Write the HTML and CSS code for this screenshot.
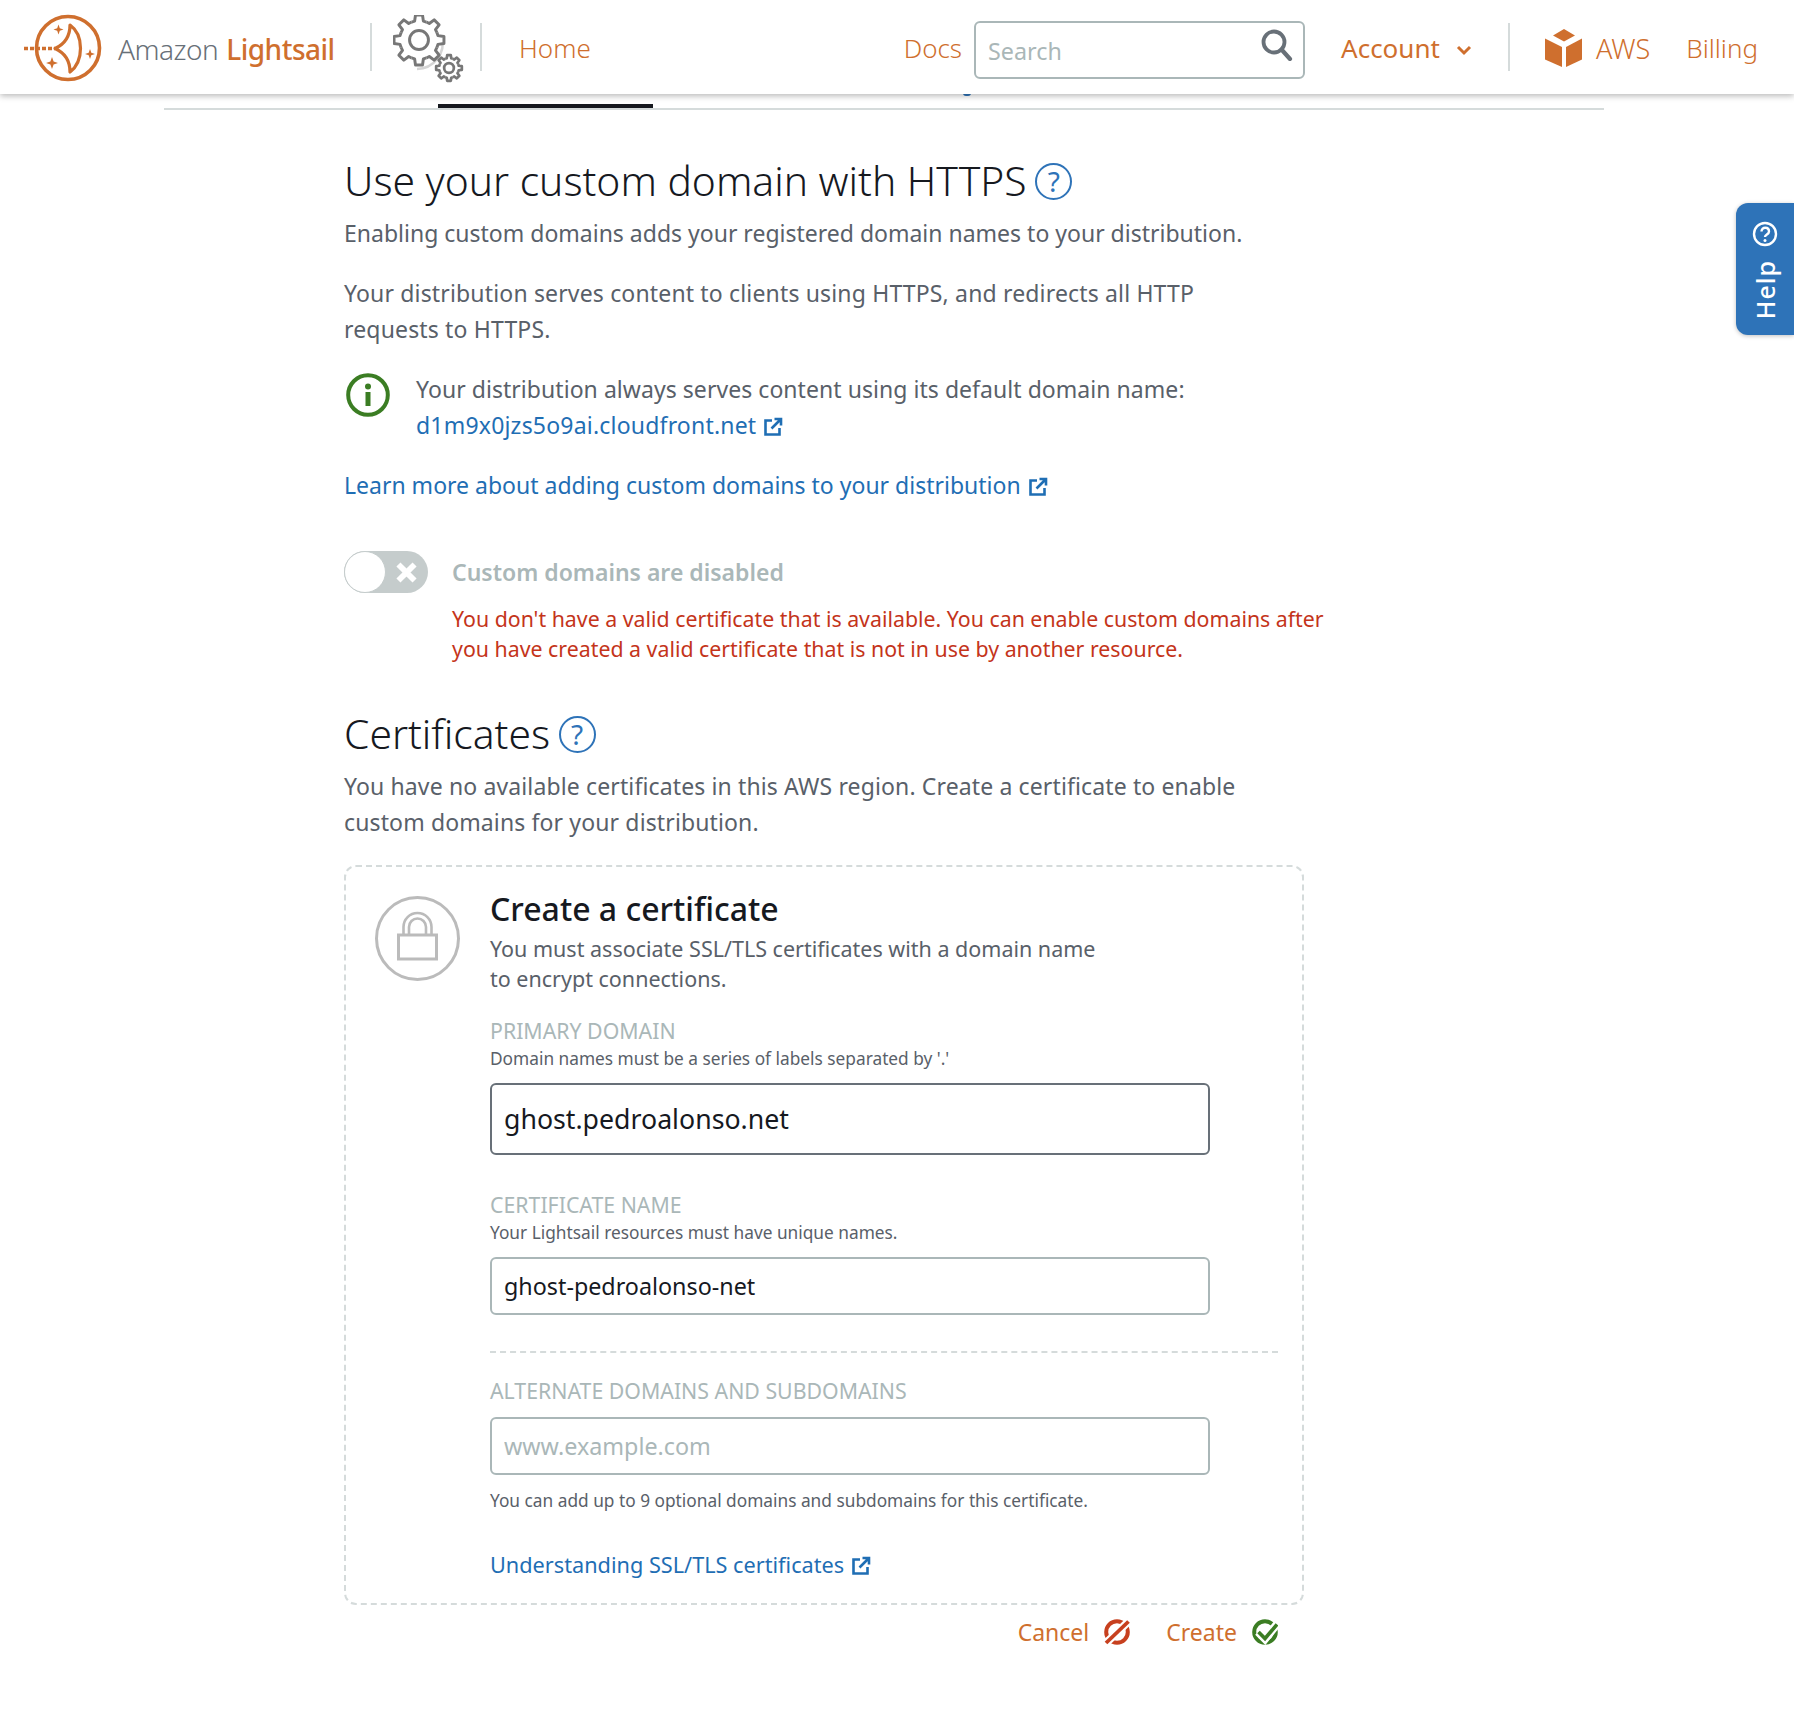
FILE: index.html
```html
<!DOCTYPE html>
<html lang="en">
<head>
<meta charset="utf-8">
<title>Amazon Lightsail</title>
<link rel="stylesheet" href="styles.css">
</head>
<body>
<svg class="defs" width="0" height="0" aria-hidden="true">
  <defs>
    <symbol id="ext" viewBox="0 0 20 20">
      <path d="M9 3.500H2.500v14h14V11" fill="none" stroke="currentColor" stroke-width="2.600"/>
      <path d="M8.500 11.500L17 3M11.500 2h6.500v6.500" fill="none" stroke="currentColor" stroke-width="2.600"/>
    </symbol>
    <g id="tooth">
      <path d="M17.090 -7.080L18.030 -4.160L23.770 -3.340L23.770 3.340L18.030 4.160L17.090 7.080"/>
    </g>
    <g id="gear">
      <use href="#tooth"/>
      <use href="#tooth" transform="rotate(45)"/>
      <use href="#tooth" transform="rotate(90)"/>
      <use href="#tooth" transform="rotate(135)"/>
      <use href="#tooth" transform="rotate(180)"/>
      <use href="#tooth" transform="rotate(225)"/>
      <use href="#tooth" transform="rotate(270)"/>
      <use href="#tooth" transform="rotate(315)"/>
    </g>
  </defs>
</svg>

<header class="topbar">
  <a class="brand">
    <svg class="brand-logo" width="80" height="70" viewBox="0 0 80 70">
      <circle cx="44" cy="35" r="31.500" fill="none" stroke="#cf6f2e" stroke-width="3.600"/>
      <path d="M46 12C60 22 60 48 46 59C46 47 41 40 31 35.500C41 31 46 24 46 12Z" fill="#fff" stroke="#cf6f2e" stroke-width="3.200" stroke-linejoin="round"/>
      <path d="M0 35.500H31" stroke="#cf6f2e" stroke-width="3.400" stroke-dasharray="4 2" fill="none"/>
      <path d="M34.500 11.500l1.300 3.700 3.700 1.300-3.700 1.300-1.300 3.700-1.300-3.700-3.700-1.300 3.700-1.300z" fill="#cf6f2e"/>
      <path d="M66 36l1.300 3.700 3.700 1.300-3.700 1.300-1.300 3.700-1.300-3.700-3.700-1.300 3.700-1.300z" fill="#cf6f2e"/>
      <path d="M28 44l1.600 4.400 4.400 1.600-4.400 1.600-1.600 4.400-1.600-4.400-4.400-1.600 4.400-1.600z" fill="#cf6f2e"/>
    </svg>
    <span class="brand-amazon">Amazon</span>
    <span class="brand-name">Lightsail</span>
  </a>
  <span class="sep sep-a"></span>
  <svg class="gears" width="72" height="70" viewBox="0 0 72 70">
    <path d="M49 22A26 26 0 0 1 24 54" fill="none" stroke="#d5d5d5" stroke-width="2.500"/>
    <g transform="translate(26 25) scale(1.050)" fill="#fff" stroke="#777" stroke-width="2.800" stroke-linejoin="round">
      <circle r="18" stroke="none"/>
      <use href="#gear"/>
      <circle r="9" fill="none"/>
    </g>
    <g transform="translate(56 53) scale(.54)" fill="#fff" stroke="#777" stroke-width="5" stroke-linejoin="round">
      <circle r="18" stroke="none"/>
      <use href="#gear"/>
      <circle r="9" fill="none"/>
    </g>
  </svg>
  <span class="sep sep-b"></span>
  <a class="nav-link nav-home">Home</a>
  <a class="nav-link nav-docs">Docs</a>
  <div class="search">
    <input class="search-input" type="text" placeholder="Search">
    <svg class="search-icon" width="32" height="32" viewBox="0 0 32 32">
      <circle cx="13" cy="13" r="10.500" fill="none" stroke="#687078" stroke-width="3.800"/>
      <path d="M20.500 20.500L29 30" stroke="#687078" stroke-width="4.200" stroke-linecap="round"/>
    </svg>
  </div>
  <a class="nav-account">Account
    <svg class="chevron" width="16" height="12" viewBox="0 0 16 12"><path d="M2 3l6 6 6-6" fill="none" stroke="#cf6f2e" stroke-width="3"/></svg>
  </a>
  <span class="sep sep-c"></span>
  <svg class="cube" width="38" height="38" viewBox="0 0 38 38">
    <path d="M19 0L30 6.500 19 12.500 8 6.500z" fill="#cf6f2e"/>
    <path d="M0 9.500L17 18V38L0 30.500z" fill="#cf6f2e"/>
    <path d="M37 9.500L21 18V38L37 30.500z" fill="#cf6f2e"/>
  </svg>
  <a class="nav-link nav-aws">AWS</a>
  <a class="nav-link nav-billing">Billing</a>
</header>

<div class="tabs">
  <span class="tab-active"></span>
  <span class="tab-peek"></span>
</div>

<aside class="help-tab">
  <svg width="26" height="26" viewBox="0 0 26 26">
    <circle cx="13" cy="13" r="11" fill="none" stroke="#fff" stroke-width="2.400"/>
    <path d="M9.500 10.500c0-5 7.500-5 7.500 0 0 3-4 3-4 5.500" fill="none" stroke="#fff" stroke-width="2.400"/>
    <circle cx="13" cy="19.500" r="1.500" fill="#fff"/>
  </svg>
  <span class="help-label">Help</span>
</aside>

<main class="content">
  <h1 class="heading heading-first">Use your custom domain with HTTPS <span class="q">?</span></h1>
  <p class="para para-tight">Enabling custom domains adds your registered domain names to your distribution.</p>
  <p class="para para-next para-wide">Your distribution serves content to clients using HTTPS, and redirects all HTTP<br>requests to HTTPS.</p>
  <div class="info">
    <svg class="info-icon" width="46" height="46" viewBox="0 0 46 46">
      <circle cx="23" cy="23" r="19.800" fill="none" stroke="#3b7d23" stroke-width="4"/>
      <rect x="20.500" y="20" width="5" height="14" fill="#3b7d23"/>
      <circle cx="23" cy="14.500" r="3" fill="#3b7d23"/>
    </svg>
    <p class="para para-info">Your distribution always serves content using its default domain name:<br><a class="link link-domain">d1m9x0jzs5o9ai.cloudfront.net<svg class="ext" width="20" height="20"><use href="#ext"/></svg></a></p>
  </div>
  <p class="para para-next"><a class="link">Learn more about adding custom domains to your distribution<svg class="ext" width="20" height="20"><use href="#ext"/></svg></a></p>

  <div class="toggle-row">
    <div class="toggle">
      <span class="knob"></span>
      <svg class="toggle-x" width="23" height="23" viewBox="0 0 20 20"><path d="M3 3l14 14M17 3L3 17" stroke="#fff" stroke-width="5"/></svg>
    </div>
    <span class="toggle-label">Custom domains are disabled</span>
  </div>
  <p class="error">You don't have a valid certificate that is available. You can enable custom domains after<br>you have created a valid certificate that is not in use by another resource.</p>

  <h2 class="heading heading-second">Certificates <span class="q">?</span></h2>
  <p class="para para-second para-cert">You have no available certificates in this AWS region. Create a certificate to enable<br>custom domains for your distribution.</p>

  <section class="card">
    <svg class="lock" width="85" height="85" viewBox="0 0 85 85" fill="none" stroke="#bbb">
      <circle cx="42.500" cy="42.500" r="41" stroke-width="3"/>
      <rect x="23.500" y="39" width="38" height="24" stroke-width="3"/>
      <path d="M28.500 39V31a14 14 0 0 1 28 0V39" stroke-width="2.600"/>
      <path d="M34 39V31a8.500 8.500 0 0 1 17 0V39" stroke-width="2.600"/>
    </svg>
    <div class="card-body">
      <h3 class="card-title">Create a certificate</h3>
      <p class="card-desc">You must associate SSL/TLS certificates with a domain name<br>to encrypt connections.</p>

      <label class="label label-first" for="primary">PRIMARY DOMAIN</label>
      <p class="hint">Domain names must be a series of labels separated by '.'</p>
      <input id="primary" class="field field-large" type="text" value="ghost.pedroalonso.net">

      <label class="label label-second" for="certname">CERTIFICATE NAME</label>
      <p class="hint">Your Lightsail resources must have unique names.</p>
      <input id="certname" class="field" type="text" value="ghost-pedroalonso-net">

      <div class="divider"></div>

      <label class="label label-third" for="alt">ALTERNATE DOMAINS AND SUBDOMAINS</label>
      <input id="alt" class="field field-alt" type="text" placeholder="www.example.com">
      <p class="hint hint-after">You can add up to 9 optional domains and subdomains for this certificate.</p>

      <a class="link card-link">Understanding SSL/TLS certificates<svg class="ext" width="20" height="20"><use href="#ext"/></svg></a>
    </div>
  </section>

  <div class="actions">
    <a class="action">Cancel
      <svg width="26" height="26" viewBox="0 0 26 26">
        <circle cx="13" cy="13" r="10.800" fill="none" stroke="#c7401f" stroke-width="4"/>
        <path d="M24 3L2 24" stroke="#fff" stroke-width="8"/>
        <path d="M24.500 2.500L2 24" stroke="#c7401f" stroke-width="3.800"/>
      </svg>
    </a>
    <a class="action">Create
      <svg width="26" height="26" viewBox="0 0 26 26">
        <circle cx="13" cy="13" r="10.800" fill="none" stroke="#3b7d23" stroke-width="4"/>
        <path d="M6 13l7 7L25 5" fill="none" stroke="#fff" stroke-width="8"/>
        <path d="M6.500 13l6.500 6.500L25 5.500" fill="none" stroke="#3b7d23" stroke-width="3.600"/>
      </svg>
    </a>
  </div>
</main>
</body>
</html>
```

FILE: styles.css
```css
* { box-sizing: border-box; }

html, body {
  margin: 0;
  padding: 0;
  background: #fff;
}

body {
  position: relative;
  font-family: "Noto Sans", "Open Sans", sans-serif;
  color: #596069;
}

.defs { position: absolute; }

p, h1, h2, h3 { margin: 0; }

/* top bar */
.topbar {
  position: relative;
  z-index: 2;
  display: flex;
  align-items: center;
  height: 94px;
  padding-top: 2px;
  background: #fff;
  box-shadow: 0 2px 6px rgba(0, 0, 0, .28);
}

.brand {
  display: flex;
  align-items: center;
  width: 370px;
  padding-left: 24px;
  font-size: 28px;
  letter-spacing: -.5px;
}

.brand-logo { flex: none; margin-right: 14px; }
.brand-amazon { margin-top: 2px; font-weight: 300; color: #687078; }
.brand-name { margin: 2px 0 0 8px; font-weight: 500; color: #cf6f2e; }

.sep {
  flex: none;
  width: 2px;
  height: 48px;
  margin-bottom: 2px;
  background: #d5dbdb;
}

.gears { flex: none; margin: 4px 0 0 21px; }
.sep-b { margin-left: 15px; }

.nav-link {
  font-size: 26px;
  font-weight: 300;
  color: #cf6f2e;
}

.nav-home { margin-left: 37px; }
.nav-docs { margin-left: auto; margin-right: 12px; }

.search {
  position: relative;
  flex: none;
  width: 331px;
  height: 58px;
  margin-top: 4px;
}

.search-input {
  width: 100%;
  height: 100%;
  padding: 2px 60px 0 12px;
  border: 2px solid #aab7b8;
  border-radius: 6px;
  font: 23.300px "Noto Sans", sans-serif;
  outline: none;
}

.search-input::placeholder { color: #aab7b8; opacity: 1; }

.search-icon { position: absolute; top: 8px; right: 12px; }

.nav-account {
  display: flex;
  align-items: center;
  flex: none;
  margin-left: 36px;
  font-size: 26px;
  color: #cf6f2e;
}

.chevron { margin-left: 16px; margin-top: 4px; }

.sep-c { margin-left: 36px; }
.cube { flex: none; margin-left: 35px; }
.nav-aws { margin-left: 13px; font-size: 27px; }
.nav-billing { margin-left: 36px; margin-right: 36px; }

/* tabs strip */
.tabs {
  position: relative;
  height: 16px;
  margin: 0 190px 0 164px;
  border-bottom: 2px solid #d5dbdb;
}

.tab-active {
  position: absolute;
  left: 274px;
  bottom: 0;
  width: 215px;
  height: 4px;
  background: #16191f;
}

.tab-peek {
  position: absolute;
  left: 799px;
  top: -1px;
  width: 8px;
  height: 3px;
  border-radius: 0 0 4px 4px;
  background: #2e73b8;
}

/* help tab */
.help-tab {
  position: absolute;
  top: 203px;
  right: 0;
  display: flex;
  flex-direction: column;
  align-items: center;
  gap: 13px;
  width: 58px;
  height: 132px;
  padding-top: 18px;
  border-radius: 12px 0 0 12px;
  background: #2e73b8;
  box-shadow: 0 1px 4px rgba(0, 0, 0, .25);
}

.help-label {
  writing-mode: vertical-rl;
  transform: rotate(180deg);
  font-size: 25px;
  font-weight: 500;
  line-height: 26px;
  letter-spacing: 1px;
  color: #fff;
}

/* content */
.content {
  width: 1000px;
  margin-left: 344px;
}

.heading {
  display: flex;
  align-items: center;
  font-weight: 300;
  font-size: 40.750px;
  line-height: 50px;
  color: #16191f;
  white-space: pre;
}

.heading-first { margin-top: 45px; }
.heading-second { margin-top: 44px; }

.q {
  display: flex;
  align-items: center;
  justify-content: center;
  width: 37px;
  height: 37px;
  margin: 2px 0 0 -2px;
  border: 2px solid #2e73b8;
  border-radius: 50%;
  font-size: 28px;
  font-weight: 400;
  line-height: 1;
  color: #2e73b8;
}

.para {
  font-size: 23px;
  line-height: 36px;
  color: #596069;
}

.para-tight { margin-top: 10px; }
.para-next { margin-top: 24px; }
.para-second { margin-top: 10px; }
.para-wide { letter-spacing: .16px; }
.para-cert { letter-spacing: .13px; }
.para-info { letter-spacing: .05px; }

.info {
  display: flex;
  margin-top: 24px;
}

.info-icon { flex: none; margin: 1px 25px 0 1px; }

.link { color: #1f6eb4; }
.link-domain { letter-spacing: .2px; }

.ext {
  margin-left: 7px;
  vertical-align: -3px;
  color: #1f6eb4;
}

.toggle-row {
  display: flex;
  align-items: center;
  gap: 24px;
  margin-top: 48px;
}

.toggle {
  position: relative;
  display: flex;
  align-items: center;
  justify-content: flex-end;
  width: 84px;
  height: 42px;
  padding-right: 10px;
  border-radius: 21px;
  background: #c5cccc;
}

.knob {
  position: absolute;
  left: 0;
  top: 0;
  width: 42px;
  height: 42px;
  border: 1px solid #c5cccc;
  border-radius: 50%;
  background: #fff;
}

.toggle-label {
  font-size: 23px;
  font-weight: 600;
  line-height: 42px;
  color: #aab7b8;
}

.error {
  margin: 11px 0 0 108px;
  font-size: 21.340px;
  line-height: 30px;
  color: #c4341a;
}

/* card */
.card {
  display: flex;
  width: 960px;
  height: 740px;
  padding: 20px 24px 19px 29px;
  border: 2px dashed #d5dbdb;
  border-radius: 12px;
  margin-top: 25px;
}

.lock { flex: none; margin: 9px 30px 0 0; }

.card-body { flex: 1; }

.card-title {
  font-size: 32px;
  font-weight: 500;
  line-height: 44px;
  color: #16191f;
}

.card-desc {
  margin-top: 3px;
  font-size: 21.500px;
  line-height: 30px;
  color: #596069;
}

.label {
  display: block;
  font-size: 21.300px;
  line-height: 30px;
  color: #aab7b8;
}

.label-first { margin-top: 22px; }
.label-second { margin-top: 35px; }
.label-third { margin-top: 23px; }

.hint {
  padding-top: 1px;
  font-size: 17.300px;
  line-height: 24px;
  color: #596069;
}

.hint-after { margin-top: 13px; }

.field {
  display: block;
  width: 720px;
  height: 58px;
  margin-top: 12px;
  padding: 0 12px;
  border: 2px solid #aab7b8;
  border-radius: 6px;
  background: #fff;
  font: 23.300px "Noto Sans", sans-serif;
  color: #16191f;
  outline: none;
}

.field::placeholder { color: #aab7b8; opacity: 1; }

.field-large {
  height: 72px;
  padding-bottom: 2px;
  border-color: #687078;
  font-size: 26.700px;
}

.field-alt { margin-top: 11px; }

.divider {
  margin-top: 36px;
  border-top: 2px dashed #d5dbdb;
}

.card-link {
  display: block;
  margin-top: 34px;
  font-size: 21.700px;
  line-height: 36px;
}

.actions {
  display: flex;
  justify-content: flex-end;
  gap: 36px;
  width: 960px;
  margin-top: 9px;
  padding-right: 26px;
}

.action {
  display: flex;
  align-items: center;
  gap: 15px;
  font-size: 23px;
  line-height: 36px;
  color: #cf6f2e;
}
```
